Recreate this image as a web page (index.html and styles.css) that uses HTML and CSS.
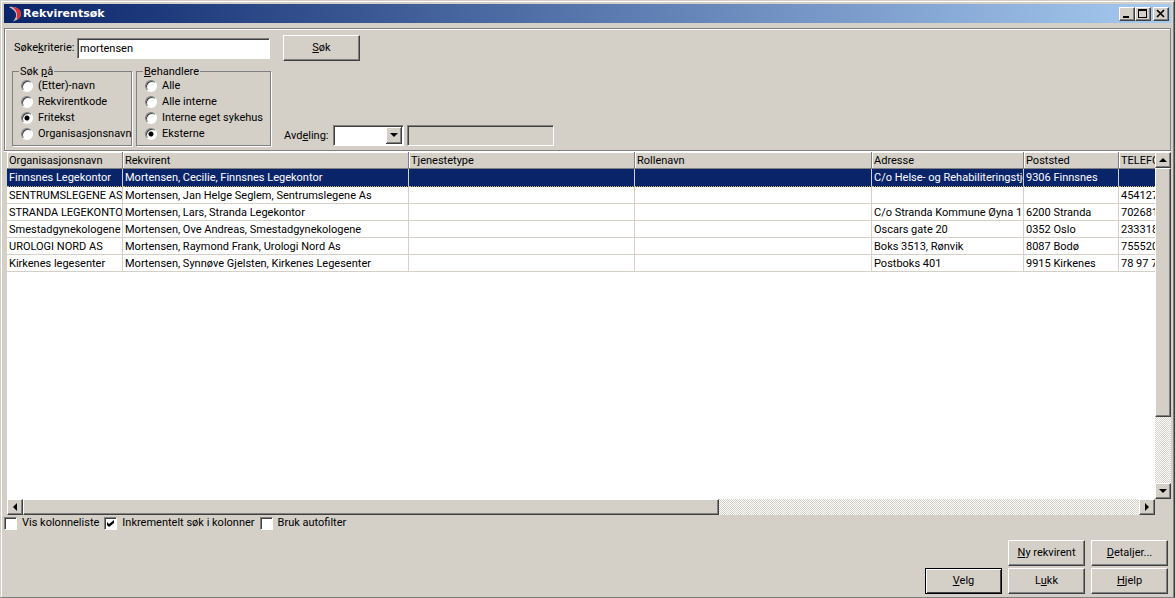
FILE: index.html
```html
<!DOCTYPE html>
<html lang="no">
<head>
<meta charset="utf-8">
<title>Rekvirentsøk</title>
<link rel="stylesheet" href="styles.css">
</head>
<body>
<main class="window">
  <header class="titlebar">
    <svg class="logo" viewBox="0 0 14 16" aria-hidden="true">
      <path d="M1 1C8 0 13 4 13 8C13 11 10 14 5 15.500C8 12 9 9 7.500 6.500C6 4 4 2.500 1 1Z" fill="#c3c6cc"/>
      <path d="M4 1C9 0.500 13 4 13 8C13 10 12 12 10 13.500C8.500 13 8.500 12 9 10C9.500 6.500 8 3.500 4 1Z" fill="#dc3034"/>
    </svg>
    <h1 class="title">Rekvirentsøk</h1>
    <div class="window-buttons">
      <button class="caption-button" aria-label="Minimer"><svg viewBox="0 0 12 10"><path d="M2 8h6" stroke="#000" stroke-width="2"/></svg></button>
      <button class="caption-button" aria-label="Maksimer"><svg viewBox="0 0 12 10"><path d="M1 1h9M1 8.500h9M1.500 0v9M9.500 0v9" stroke="#000" fill="none"/><path d="M1 1h9" stroke="#000" stroke-width="2"/></svg></button>
      <button class="caption-button close" aria-label="Lukk vindu"><svg viewBox="0 0 12 10"><path d="M2 1l7 7M9 1l-7 7" stroke="#000" stroke-width="1.700"/></svg></button>
    </div>
  </header>

  <form class="search-panel">
    <div class="criteria">
      <label for="criterion">Søke<u>k</u>riterie:</label>
      <input class="field criterion" id="criterion" type="text" value="mortensen">
      <button class="button search-button" type="button"><span><u>S</u>øk</span></button>
    </div>
    <div class="filters">
      <fieldset class="group search-in">
        <legend>Søk <u>p</u>å</legend>
        <label><input type="radio" name="felt">(Etter)-navn</label>
        <label><input type="radio" name="felt">Rekvirentkode</label>
        <label><input type="radio" name="felt" checked>Fritekst</label>
        <label><input type="radio" name="felt">Organisasjonsnavn</label>
      </fieldset>
      <fieldset class="group providers">
        <legend><u>B</u>ehandlere</legend>
        <label><input type="radio" name="behandler">Alle</label>
        <label><input type="radio" name="behandler">Alle interne</label>
        <label><input type="radio" name="behandler">Interne eget sykehus</label>
        <label><input type="radio" name="behandler" checked>Eksterne</label>
      </fieldset>
      <div class="department">
        <label for="department">Avd<u>e</u>ling:</label>
        <select class="field department-select" id="department"><option></option></select>
        <input class="field department-name" type="text" aria-label="Avdelingsnavn" readonly>
      </div>
    </div>
  </form>

  <section class="results">
    <div class="table-view">
      <table class="table">
        <colgroup><col class="c-org"><col class="c-req"><col class="c-type"><col class="c-role"><col class="c-addr"><col class="c-post"><col class="c-tel"></colgroup>
        <thead>
          <tr><th>Organisasjonsnavn</th><th>Rekvirent</th><th>Tjenestetype</th><th>Rollenavn</th><th>Adresse</th><th>Poststed</th><th>TELEFON</th></tr>
        </thead>
        <tbody>
          <tr class="selected"><td>Finnsnes Legekontor</td><td>Mortensen, Cecilie, Finnsnes Legekontor</td><td></td><td></td><td>C/o Helse- og Rehabiliteringstje</td><td>9306 Finnsnes</td><td></td></tr>
          <tr><td>SENTRUMSLEGENE AS</td><td>Mortensen, Jan Helge Seglem, Sentrumslegene As</td><td></td><td></td><td></td><td></td><td>454127</td></tr>
          <tr><td>STRANDA LEGEKONTOR</td><td>Mortensen, Lars, Stranda Legekontor</td><td></td><td></td><td>C/o Stranda Kommune Øyna 1</td><td>6200 Stranda</td><td>702681</td></tr>
          <tr><td>Smestadgynekologene</td><td>Mortensen, Ove Andreas, Smestadgynekologene</td><td></td><td></td><td>Oscars gate 20</td><td>0352 Oslo</td><td>233318</td></tr>
          <tr><td>UROLOGI NORD AS</td><td>Mortensen, Raymond Frank, Urologi Nord As</td><td></td><td></td><td>Boks 3513, Rønvik</td><td>8087 Bodø</td><td>755520</td></tr>
          <tr><td>Kirkenes legesenter</td><td>Mortensen, Synnøve Gjelsten, Kirkenes Legesenter</td><td></td><td></td><td>Postboks 401</td><td>9915 Kirkenes</td><td>78 97 7</td></tr>
        </tbody>
      </table>
    </div>
    <div class="scrollbar vertical">
      <button class="scroll-button" aria-label="Rull opp"><svg viewBox="0 0 8 8"><path d="M4 2l4 4H0z"/></svg></button>
      <div class="track"><div class="thumb"></div></div>
      <button class="scroll-button" aria-label="Rull ned"><svg viewBox="0 0 8 8"><path d="M4 6l4-4H0z"/></svg></button>
    </div>
    <div class="scrollbar horizontal">
      <button class="scroll-button" aria-label="Rull til venstre"><svg viewBox="0 0 8 8"><path d="M2 4l4-4v8z"/></svg></button>
      <div class="track"><div class="thumb"></div></div>
      <button class="scroll-button" aria-label="Rull til høyre"><svg viewBox="0 0 8 8"><path d="M6 4L2 0v8z"/></svg></button>
    </div>
  </section>

  <div class="options">
    <label><input type="checkbox">Vis kolonneliste</label>
    <label><input type="checkbox" checked>Inkrementelt søk i kolonner</label>
    <label><input type="checkbox">Bruk autofilter</label>
  </div>

  <footer class="actions">
    <div class="action-row">
      <button class="button"><span><u>N</u>y rekvirent</span></button>
      <button class="button"><span><u>D</u>etaljer...</span></button>
    </div>
    <div class="action-row">
      <button class="button default"><span><u>V</u>elg</span></button>
      <button class="button"><span>L<u>u</u>kk</span></button>
      <button class="button"><span><u>H</u>jelp</span></button>
    </div>
  </footer>
</main>
</body>
</html>
```
FILE: styles.css
```css
:root {
  --face: #d4d0c8;
  --shadow: #808080;
  --dark: #404040;
  --light: #ffffff;
  --navy: #0a246a;
}

* {
  box-sizing: border-box;
}

body {
  margin: 0;
  font: 11px/16px Roboto, "Liberation Sans", Arial, sans-serif;
  color: #000;
  background: var(--face);
}

button,
input,
select {
  font: inherit;
  color: inherit;
  margin: 0;
}

u {
  text-underline-offset: 1px;
}

.window {
  display: flex;
  flex-direction: column;
  height: 100vh;
  min-height: 420px;
  padding: 2px 2px 3px;
  border: 1px solid;
  border-color: var(--face) var(--dark) var(--shadow) var(--face);
  box-shadow: inset 1px 1px 0 var(--light), inset -1px 0 0 var(--shadow);
}

.titlebar {
  display: flex;
  align-items: center;
  height: 19px;
  margin: 1px 1px 0;
  padding: 0 2px 0 4px;
  background: linear-gradient(to right, var(--navy), #a6caf0);
}

.logo {
  width: 14px;
  height: 16px;
}

.title {
  flex: 1;
  margin: 0 0 0 1px;
  font: bold 11px/18px "DejaVu Sans", sans-serif;
  color: #fff;
}

.window-buttons {
  display: flex;
}

.caption-button,
.scroll-button,
.button {
  display: flex;
  align-items: center;
  justify-content: center;
  padding: 0;
  background: var(--face);
  border: 1px solid;
  border-color: var(--light) var(--dark) var(--dark) var(--light);
  border-radius: 0;
  box-shadow: inset -1px -1px 0 var(--shadow);
}

.caption-button {
  width: 16px;
  height: 14px;
}

.caption-button svg {
  width: 12px;
  height: 10px;
}

.close {
  margin-left: 2px;
}

.search-panel {
  display: flex;
  flex-direction: column;
  gap: 4px;
  margin: 5px 1px 0;
  padding: 6px 7px 4px;
  border: 1px solid var(--shadow);
  box-shadow: inset 1px 1px 0 var(--light), 0 1px 0 var(--light);
}

.criteria {
  display: flex;
  align-items: center;
  padding-left: 2px;
}

.criteria label {
  width: 60px;
  white-space: nowrap;
}

.field {
  height: 21px;
  padding: 0 1px;
  background: #fff;
  border: 1px solid;
  border-color: var(--shadow) var(--light) var(--light) var(--shadow);
  border-radius: 0;
  box-shadow: inset 1px 1px 0 var(--dark);
  outline: none;
}

.criterion {
  width: 193px;
  margin: 0 13px 0 3px;
  padding-left: 2px;
}

.button {
  width: 77px;
  height: 26px;
}

.filters {
  display: flex;
  gap: 4px;
}

.group {
  display: flex;
  flex-direction: column;
  min-width: 0;
  margin: 0;
  padding: 0 0 3px 8px;
  border: 1px solid var(--shadow);
  box-shadow: 1px 1px 0 var(--light);
}

.group legend {
  height: 13px;
  margin-left: -2px;
  padding: 0 1px;
  line-height: 13px;
  background: var(--face);
}

.group label {
  display: flex;
  align-items: center;
  gap: 5px;
  height: 16px;
  white-space: nowrap;
}

.search-in {
  width: 120px;
}

.providers {
  width: 135px;
}

input[type="radio"] {
  appearance: none;
  flex: none;
  width: 12px;
  height: 12px;
  border: 1px solid;
  border-color: var(--shadow) var(--light) var(--light) var(--shadow);
  border-radius: 50%;
  background: #fff;
  box-shadow: inset 1px 1px 0 var(--dark);
}

input[type="radio"]:checked {
  background: radial-gradient(circle, #000 2px, #fff 3px);
}

.department {
  display: flex;
  align-items: center;
  align-self: flex-end;
  margin-left: 9px;
}

.department label {
  width: 45px;
}

.department-select {
  appearance: none;
  width: 71px;
  margin: 0 3px 0 4px;
  background: #fff url("data:image/svg+xml,%3Csvg xmlns='http://www.w3.org/2000/svg' width='16' height='17'%3E%3Cpath fill='%23404040' d='M0 0h16v17H0z'/%3E%3Cpath fill='%23fff' d='M0 0h15v16H0z'/%3E%3Cpath fill='%23808080' d='M1 1h14v15H1z'/%3E%3Cpath fill='%23d4d0c8' d='M1 1h13v14H1z'/%3E%3Cpath d='M4 6h8l-4 4z'/%3E%3C/svg%3E") no-repeat right 1px center;
}

.department-name {
  width: 147px;
  background: var(--face);
}

.results {
  display: grid;
  flex: 1;
  grid-template: minmax(0, 1fr) 16px / minmax(0, 1fr) 16px;
  margin: 1px 1px 0 4px;
}

.table-view {
  overflow: hidden;
  background: #fff;
}

.table {
  width: 1184px;
  table-layout: fixed;
  border-collapse: separate;
  border-spacing: 0;
}

.c-org { width: 116px; }
.c-req { width: 286px; }
.c-type { width: 226px; }
.c-role { width: 237px; }
.c-addr { width: 152px; }
.c-post { width: 95px; }
.c-tel { width: 72px; }

.table th,
.table td {
  height: 17px;
  padding: 2px 0 0 2px;
  overflow: hidden;
  font-weight: normal;
  line-height: 14px;
  text-align: left;
  white-space: nowrap;
  border: solid var(--face);
  border-width: 0 1px 1px 0;
}

.table th {
  background: var(--face);
  border-color: var(--shadow);
  box-shadow: inset 1px 1px 0 var(--light);
}

.table .selected td {
  height: 18px;
  padding-top: 1px;
  color: #fff;
  background: var(--navy);
  border-bottom: 1px dotted #c8b070;
}

.scrollbar {
  display: flex;
}

.vertical {
  flex-direction: column;
}

.scroll-button {
  flex: none;
  width: 16px;
  height: 16px;
}

.scroll-button svg {
  width: 8px;
  height: 8px;
}

.track {
  flex: 1;
  background: repeating-conic-gradient(#fff 0 25%, var(--face) 0 50%) 0 0 / 2px 2px;
}

.thumb {
  background: var(--face);
  border: 1px solid;
  border-color: var(--light) var(--dark) var(--dark) var(--light);
  box-shadow: inset -1px -1px 0 var(--shadow);
}

.vertical .thumb {
  height: 79%;
}

.horizontal .thumb {
  width: 62.4%;
  height: 100%;
}

.options {
  display: flex;
  gap: 5px;
  margin-left: 1px;
}

.options label {
  display: flex;
  align-items: center;
  gap: 5px;
}

input[type="checkbox"] {
  appearance: none;
  width: 13px;
  height: 13px;
  border: 1px solid;
  border-color: var(--shadow) var(--light) var(--light) var(--shadow);
  background: #fff;
  box-shadow: inset 1px 1px 0 var(--dark);
}

input[type="checkbox"]:checked {
  background: #fff url("data:image/svg+xml,%3Csvg xmlns='http://www.w3.org/2000/svg' width='11' height='11'%3E%3Cpath d='M2 4l2 2 5-4v3L4 9 2 7z'/%3E%3C/svg%3E") no-repeat center;
}

.actions {
  display: flex;
  flex-direction: column;
  gap: 2px;
  padding: 9px 4px 0 0;
}

.action-row {
  display: flex;
  justify-content: flex-end;
  gap: 6px;
}

.default {
  border-color: #000;
  box-shadow: inset 1px 1px 0 var(--light), inset -1px -1px 0 var(--dark);
}
```
